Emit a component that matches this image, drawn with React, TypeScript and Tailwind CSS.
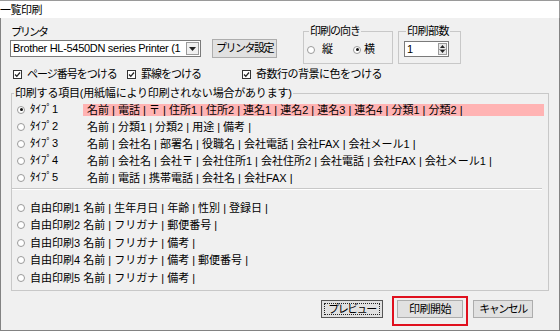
import React from "react";

const TYPE_ROWS = [
  "名前 | 電話 | 〒 | 住所1 | 住所2 | 連名1 | 連名2 | 連名3 | 連名4 | 分類1 | 分類2 |",
  "名前 | 分類1 | 分類2 | 用途 | 備考 |",
  "名前 | 会社名 | 部署名 | 役職名 | 会社電話 | 会社FAX | 会社メール1 |",
  "名前 | 会社名 | 会社〒 | 会社住所1 | 会社住所2 | 会社電話 | 会社FAX | 会社メール1 |",
  "名前 | 電話 | 携帯電話 | 会社名 | 会社FAX |",
];

const FREE_ROWS = [
  "名前 | 生年月日 | 年齢 | 性別 | 登録日 |",
  "名前 | フリガナ | 郵便番号 |",
  "名前 | フリガナ | 備考 |",
  "名前 | フリガナ | 備考 | 郵便番号 |",
  "名前 | フリガナ | 備考 |",
];

function Radio({ checked }: { checked?: boolean }) {
  return (
    <span className="w-[8px] h-[8px] shrink-0 rounded-full border border-[#9a9a9a] bg-white flex items-center justify-center">
      {checked && <span className="w-[3px] h-[3px] rounded-full bg-[#111]" />}
    </span>
  );
}

function Checkbox() {
  return (
    <span className="w-[9px] h-[9px] shrink-0 border border-[#333] bg-white flex items-center justify-center">
      <svg width="7" height="7" viewBox="0 0 7 7">
        <path d="M1 3.5 L2.8 5.3 L6 1.5" stroke="#222" strokeWidth="1.3" fill="none" />
      </svg>
    </span>
  );
}

function WinButton({ children, className = "" }: { children: React.ReactNode; className?: string }) {
  return (
    <div className={`h-[18px] flex items-center justify-center whitespace-nowrap bg-[#e1e1e1] border border-[#adadad] ${className}`}>
      {children}
    </div>
  );
}

export default function App() {
  return (
    <div className="w-[560px] h-[331px] flex flex-col bg-[#f0f0f0] text-[11px] text-black font-['Liberation_Sans','Noto_Sans_CJK_JP',sans-serif] overflow-hidden">
      {/* title bar */}
      <div className="h-[18px] shrink-0 bg-white border-t border-r border-[#9a9a9a] leading-[18px] tracking-[-0.5px]">一覧印刷</div>

      <div className="flex-1 flex flex-col px-[9px] border-l border-r border-b border-[#828282]">
        {/* printer / orientation / copies */}
        <div className="flex items-start">
          <div className="w-[191px] pt-[8px]">
            <div className="leading-[13px] pl-[1px] tracking-[-2px]">プリンタ</div>
            <div className="mt-[1px] h-[17px] flex items-center bg-white border border-[#7a7a7a]">
              <span className="flex-1 overflow-hidden whitespace-nowrap pl-[2px] leading-[15px] tracking-[-0.3px]">
                Brother HL-5450DN series Printer (1
              </span>
              <span className="w-[13px] h-[13px] mr-[1px] shrink-0 border border-[#9a9a9a] bg-[#f0f0f0] flex items-center justify-center">
                <svg width="7" height="4" viewBox="0 0 7 4">
                  <path d="M0 0 H7 L3.5 4 Z" fill="#222" />
                </svg>
              </span>
            </div>
          </div>

          <WinButton className="ml-[11px] mt-[21px] w-[65px] h-[19px] tracking-[-1.5px]">プリンタ設定</WinButton>

          <fieldset className="ml-[26px] mt-[7px] w-[90px] h-[39px] min-w-0 border border-[#c8c8c8] px-[3px]">
            <legend className="ml-[2px] px-[1px] leading-[13px] tracking-[-1px]">印刷の向き</legend>
            <div className="flex items-center pt-[5px] leading-[13px]">
              <Radio />
              <span className="ml-[7px]">縦</span>
              <span className="ml-[20px]">
                <Radio checked />
              </span>
              <span className="ml-[3px]">横</span>
            </div>
          </fieldset>

          <fieldset className="ml-[5px] mt-[7px] w-[63px] h-[39px] min-w-0 border border-[#c8c8c8] px-[5px]">
            <legend className="ml-[2px] px-[1px] leading-[13px] tracking-[-0.5px]">印刷部数</legend>
            <div className="mt-[3px] w-[45px] h-[16px] flex items-center bg-white border border-[#7a7a7a]">
              <span className="flex-1 pl-[2px] leading-[14px]">1</span>
              <span className="w-[9px] h-[12px] mr-[1px] flex flex-col border border-[#9a9a9a] bg-[#e8e8e8]">
                <span className="flex-1 flex items-center justify-center border-b border-[#9a9a9a]">
                  <svg width="5" height="3" viewBox="0 0 5 3">
                    <path d="M0 3 H5 L2.5 0 Z" fill="#222" />
                  </svg>
                </span>
                <span className="flex-1 flex items-center justify-center">
                  <svg width="5" height="3" viewBox="0 0 5 3">
                    <path d="M0 0 H5 L2.5 3 Z" fill="#222" />
                  </svg>
                </span>
              </span>
            </div>
          </fieldset>
        </div>

        {/* options */}
        <div className="mt-[4px] flex items-center leading-[13px] whitespace-nowrap">
          <div className="w-[117px] flex items-center pl-[3px] gap-[5px]">
            <Checkbox />
            <span className="tracking-[-1px]">ページ番号をつける</span>
          </div>
          <div className="w-[115px] flex items-center gap-[5px]">
            <Checkbox />
            <span className="tracking-[-1px]">罫線をつける</span>
          </div>
          <div className="flex items-center gap-[5px]">
            <Checkbox />
            <span className="tracking-[-0.5px]">奇数行の背景に色をつける</span>
          </div>
        </div>

        {/* print items */}
        <fieldset className="mt-[6px] ml-[1px] w-[538px] h-[204px] min-w-0 border border-[#c8c8c8]">
          <legend className="ml-[2px] px-[1px] leading-[13px] tracking-[-0.2px]">印刷する項目(用紙幅により印刷されない場合があります)</legend>
          <div className="flex flex-col pt-[1px]">
            {TYPE_ROWS.map((row, i) => (
              <div key={i} className="h-[17px] flex items-center pl-[5px] whitespace-nowrap">
                <Radio checked={i === 0} />
                <span className="ml-[5px] w-[53px]">ﾀｲﾌﾟ{i + 1}</span>
                <span className={`w-[461px] h-[12px] pl-[4px] leading-[12px] ${i === 0 ? "bg-[#ffb3b3]" : ""}`}>
                  {row}
                </span>
              </div>
            ))}
          </div>

          <div className="mt-[2px] w-[530px] border-t border-[#c8c8c8] border-b border-b-white" />

          <div className="flex flex-col pt-[9px]">
            {FREE_ROWS.map((row, i) => (
              <div key={i} className="h-[17.5px] flex items-center pl-[5px] whitespace-nowrap">
                <Radio />
                <span className="ml-[5px]">自由印刷{i + 1} {row}</span>
              </div>
            ))}
          </div>
        </fieldset>

        {/* action buttons */}
        <div className="mt-[5px] flex items-start justify-end pr-[17px]">
          <div className="mt-[4px] w-[62px] h-[18px] p-[2px] bg-[#e1e1e1] border border-[#555]">
            <div className="w-full h-full flex items-center justify-center whitespace-nowrap leading-[12px] tracking-[-1.5px] border border-dotted border-[#222]">
              プレビュー
            </div>
          </div>
          <div className="ml-[9px] border-2 border-[#e0101e] pt-[2px] pb-[6px] px-[3px]">
            <WinButton className="w-[66px] tracking-[-0.5px]">印刷開始</WinButton>
          </div>
          <WinButton className="ml-[5px] mt-[4px] w-[60px] tracking-[-1.5px]">キャンセル</WinButton>
        </div>
      </div>
    </div>
  );
}
